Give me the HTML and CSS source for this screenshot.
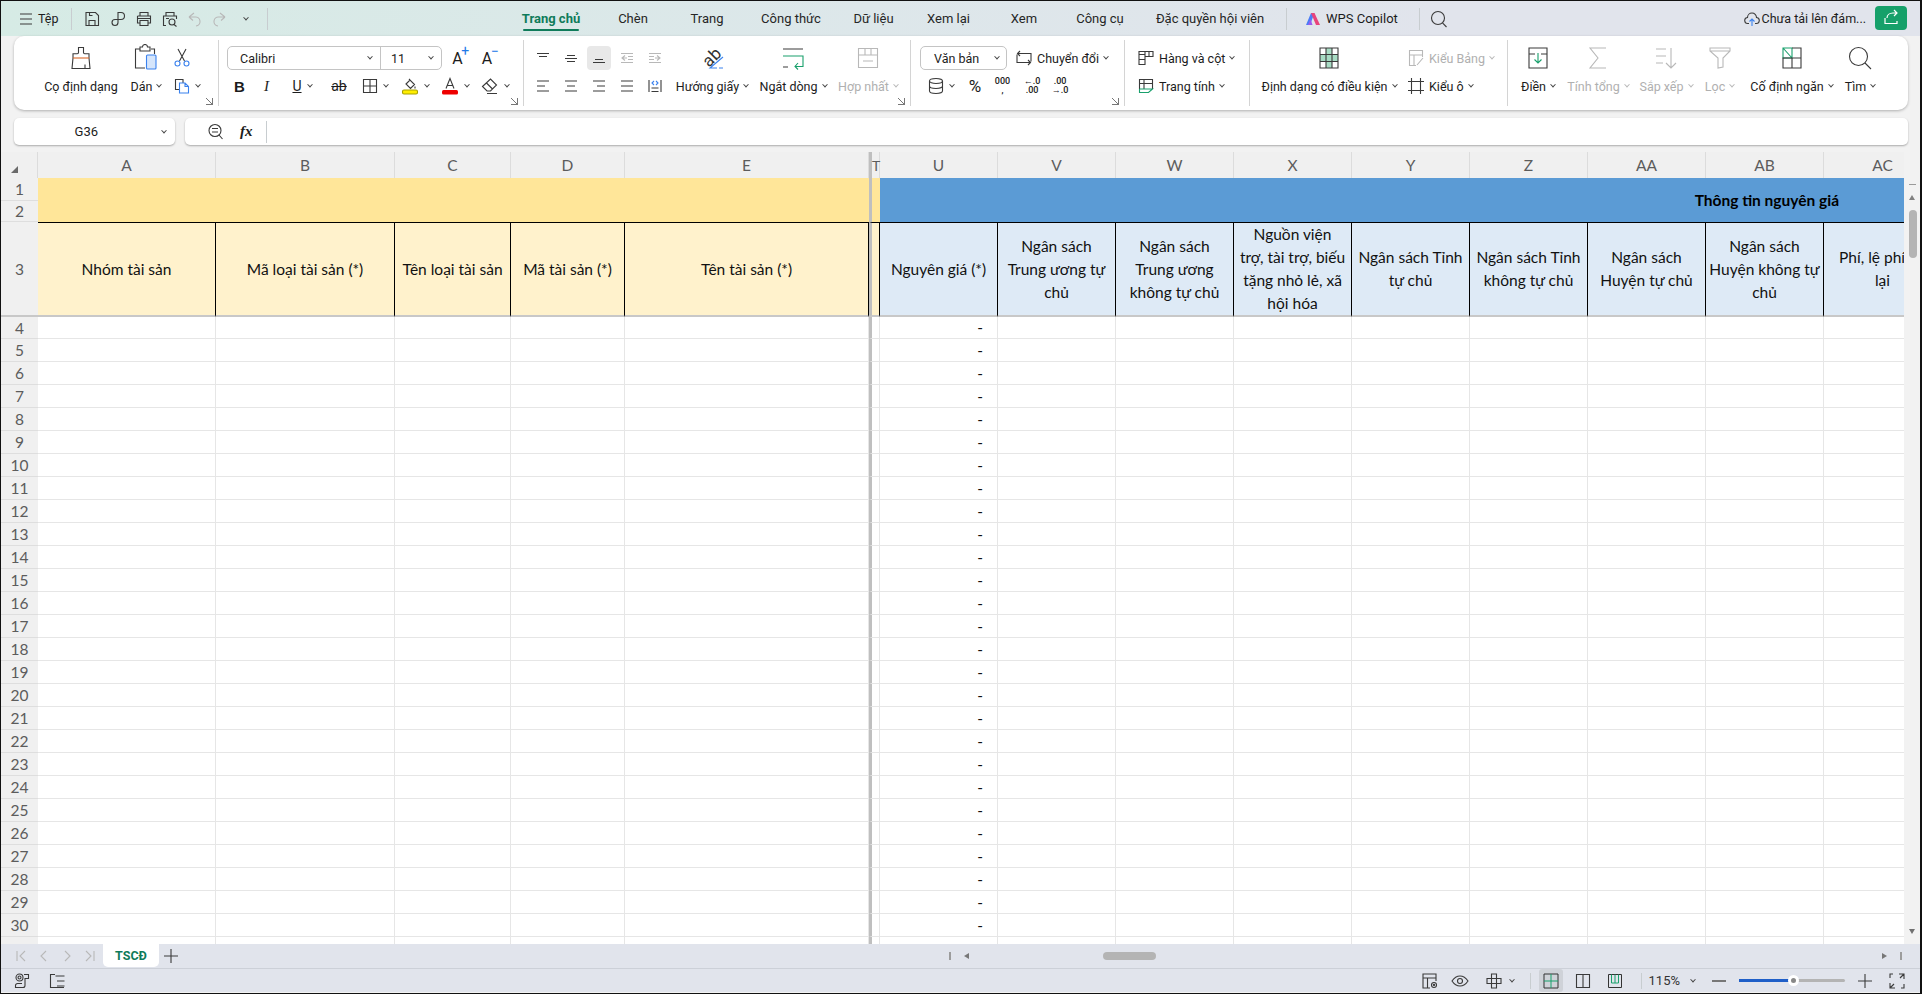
FILE: index.html
```html
<!DOCTYPE html>
<html lang="vi">
<head>
    <meta charset="UTF-8">
    <meta name="viewport" content="width=device-width, initial-scale=1.0">
    <title>TSCĐ</title>
    <link rel="stylesheet" href="styles.css">
</head>
<body>
<div class="app">

    <!-- Title bar -->
    <header class="titlebar">
        <div class="quick">
            <svg class="ico ham" width="16" height="16" viewBox="0 0 16 16"><path d="M2 3h12M2 8h12M2 13h12"/></svg>
            <span class="file">Tệp</span>
            <i class="vline first"></i>
            <svg class="ico q" width="16" height="16" viewBox="0 0 16 16"><path d="M2 1.500h9.500l3 3v10h-12.500zM5 14.500v-5h6v5M5.500 1.500v3h3"/></svg>
            <svg class="ico q" width="16" height="16" viewBox="0 0 16 16"><path d="M8 1.500h3a3.500 3.500 0 0 1 0 7H8zM8 8.500v3a3 3 0 1 1-3-3h3"/></svg>
            <svg class="ico q" width="16" height="16" viewBox="0 0 16 16"><path d="M4 5V1.500h8V5M1.500 5h13v7H12M4 12H1.500V5M4 9.500h8v5H4zM1.500 7.500h13"/></svg>
            <svg class="ico q" width="16" height="16" viewBox="0 0 16 16"><path d="M4 5V1.500h8V5M1.500 12V5h13v3M4 14.500H1.500V12M4 7.500h3"/><circle cx="10" cy="11" r="3"/><path d="M12 13.500l2.500 2"/></svg>
            <svg class="ico q off undo" width="16" height="16" viewBox="0 0 16 16"><path d="M3 6l5-4M3 6l4 3.500M3 6h6a4.500 4.500 0 0 1 1 9"/></svg>
            <svg class="ico q off" width="16" height="16" viewBox="0 0 16 16"><path d="M13 6L8 2M13 6l-4 3.500M13 6H7a4.500 4.500 0 0 0-1 9"/></svg>
            <i class="chev qchev"></i>
            <i class="vline last"></i>
        </div>
        <nav class="tabs">
            <a class="tab active">Trang chủ</a>
            <a class="tab">Chèn</a>
            <a class="tab">Trang</a>
            <a class="tab">Công thức</a>
            <a class="tab">Dữ liệu</a>
            <a class="tab">Xem lại</a>
            <a class="tab">Xem</a>
            <a class="tab">Công cụ</a>
            <a class="tab">Đặc quyền hội viên</a>
        </nav>
        <i class="vline copilot-sep"></i>
        <div class="copilot">
            <svg width="16" height="14" viewBox="0 0 16 14"><path d="M1 13L6 1h3.500L5 13z" fill="#4a7cf6"/><path d="M6 1h3.500l5.500 12h-4z" fill="#e8447c"/><path d="M3 13l2.500-6 2 6z" fill="#9a5cf0"/></svg>
            <span>WPS Copilot</span>
        </div>
        <i class="vline search-sep"></i>
        <svg class="ico find" width="18" height="18" viewBox="0 0 18 18"><circle cx="8" cy="8" r="6.500"/><path d="M12.500 12.800l4 4.200"/></svg>
        <div class="cloud">
            <svg class="ico" width="16" height="16" viewBox="0 0 16 16"><path d="M5 12.500H4a3 3 0 0 1-.5-6 4.500 4.500 0 0 1 9 0 3 3 0 0 1-.5 6h-1"/><path class="blue" d="M8 15V8M5.500 10.500L8 8l2.500 2.500"/></svg>
            <span>Chưa tải lên đám...</span>
        </div>
        <button class="share">
            <svg width="18" height="18" viewBox="0 0 18 18"><path d="M3 9v5.500h12V12M5 9c0-3 2.500-5 6-5h4M12 1l3 3-3 3" fill="none" stroke="#fff" stroke-width="1.200"/></svg>
        </button>
    </header>

    <!-- Ribbon -->
    <section class="ribbon">
        <div class="group g1">
            <div class="big w90">
                <svg class="ico" width="24" height="24" viewBox="0 0 24 24"><path d="M9.500 1.500h5v5c0 .8.500 1.200 1.200 1.200h4.300v4.300l1 10.500H3l1-10.500V7.700h4.300c.700 0 1.200-.400 1.200-1.200z"/><path class="orange" d="M4 12h16"/><path d="M16 22.500v-4"/></svg>
                <span>Cọ định dạng</span>
            </div>
            <div class="big w40">
                <svg class="ico" width="24" height="26" viewBox="0 0 24 26"><path d="M6 4H1.500v19H11M17 4h3.500v5M6 2h2.500a2 2 0 0 1 5 0H16v4H6z"/><rect class="blue-fill" x="12.500" y="10" width="9.500" height="14" rx="1"/></svg>
                <span class="lab">Dán<i class="chev"></i></span>
            </div>
            <div class="tools col-copy">
                <div class="tool cut"><svg class="ico" width="16" height="20" viewBox="0 0 16 20"><path d="M4 1l6.500 12M12 1L5.500 13"/><circle class="blue" cx="3.500" cy="15.500" r="2.500"/><circle class="blue" cx="12.500" cy="15.500" r="2.500"/></svg></div>
                <div class="tool"><svg class="ico" width="16" height="16" viewBox="0 0 16 16"><path d="M5 11.500H1.500v-10H9V5"/><path class="blue" d="M5.500 5h5.500l3.500 3.500v6.500h-9zM11 5v3.500h3.500"/></svg><i class="chev"></i></div>
            </div>
            <i class="launcher"></i>
        </div>

        <div class="group g2">
            <div class="tools">
                <div class="line font-line">
                    <div class="select">
                        <span class="font-name">Calibri<i class="chev"></i></span>
                        <span class="font-size">11<i class="chev"></i></span>
                    </div>
                    <div class="tool"><span class="grow">A<b>+</b></span></div>
                    <div class="tool"><span class="grow">A<b>−</b></span></div>
                </div>
                <div class="line format-line">
                    <div class="tool bold">B</div>
                    <div class="tool italic">I</div>
                    <div class="tool"><span class="under">U</span><i class="chev"></i></div>
                    <div class="tool strike">ab</div>
                    <div class="tool"><svg class="ico" width="16" height="16" viewBox="0 0 16 16"><path d="M1.500 1.500h13v13h-13zM8 1.500v13M1.500 8h13"/></svg><i class="chev"></i></div>
                    <div class="tool"><svg class="ico" width="18" height="18" viewBox="0 0 18 18"><path d="M5 7l4-4 4.500 4.500-4 4zM8 2l1 1M14 9.500v2"/><rect x="1.500" y="13" width="15" height="4" rx="1.500" fill="#ffee00" stroke="#a8a000"/></svg><i class="chev"></i></div>
                    <div class="tool"><svg class="ico" width="18" height="18" viewBox="0 0 18 18"><path d="M5 11.500L9 1.500l4 10M6.200 8.500h5.600"/><rect x="1" y="13" width="16" height="4.500" rx="1.500" fill="#ee0000" stroke="none"/></svg><i class="chev"></i></div>
                    <div class="tool"><svg class="ico" width="18" height="18" viewBox="0 0 18 18"><path d="M1.500 9.500L9.500 2l6 6-6 6H6zM5.500 6l6 6M6 16.500h10"/></svg><i class="chev"></i></div>
                </div>
            </div>
            <i class="launcher"></i>
        </div>

        <div class="group g3">
            <div class="tools">
                <div class="line align-line">
                    <div class="tool"><svg class="ico" width="14" height="12" viewBox="0 0 14 12"><path d="M1 1.500h12M3 4.500h8"/></svg></div>
                    <div class="tool"><svg class="ico" width="14" height="12" viewBox="0 0 14 12"><path d="M3 3.500h8M1 6.500h12M3 9.500h8"/></svg></div>
                    <div class="tool"><span class="selected"><svg class="ico" width="14" height="12" viewBox="0 0 14 12"><path d="M3 7.500h8M1 10.500h12"/></svg></span></div>
                    <div class="tool"><svg class="ico off" width="14" height="12" viewBox="0 0 14 12"><path d="M1 1.500h12M8 4.500h5M8 7.500h5M1 10.500h12M5 3.500L2 6l3 2.500M2 6h5"/></svg></div>
                    <div class="tool"><svg class="ico off" width="14" height="12" viewBox="0 0 14 12"><path d="M1 1.500h12M1 4.500h5M1 7.500h5M1 10.500h12M9 3.500L12 6l-3 2.500M12 6H7"/></svg></div>
                </div>
                <div class="line align-line">
                    <div class="tool"><svg class="ico" width="14" height="12" viewBox="0 0 14 12"><path d="M1 1h12M1 6h8M1 11h12"/></svg></div>
                    <div class="tool"><svg class="ico" width="14" height="12" viewBox="0 0 14 12"><path d="M1 1h12M3 6h8M1 11h12"/></svg></div>
                    <div class="tool"><svg class="ico" width="14" height="12" viewBox="0 0 14 12"><path d="M1 1h12M5 6h8M1 11h12"/></svg></div>
                    <div class="tool"><svg class="ico" width="14" height="12" viewBox="0 0 14 12"><path d="M1 1h12M1 6h12M1 11h12"/></svg></div>
                    <div class="tool"><svg class="ico" width="14" height="14" viewBox="0 0 14 14"><path d="M1 1v12M13 1v12M3.500 9h7M3.500 12.500h7"/><path class="blue" d="M6 2L4 4l2 2M8 2l2 2-2 2"/></svg></div>
                </div>
            </div>
            <div class="big w86">
                <div class="orient"><span>ab</span><svg class="ico" width="24" height="24" viewBox="0 0 24 24"><path class="blue" d="M23 11L10 22h7M19 22h4"/></svg></div>
                <span class="lab">Hướng giấy<i class="chev"></i></span>
            </div>
            <div class="big w76">
                <svg class="ico" width="22" height="22" viewBox="0 0 22 22"><path d="M1 2h20M1 20h5"/><path class="green" d="M1 9h20v10.500h-8M16 16l-3 3.500 3 3"/></svg>
                <span class="lab">Ngắt dòng<i class="chev"></i></span>
            </div>
            <div class="big w74 dim">
                <svg class="ico" width="22" height="22" viewBox="0 0 22 22"><path d="M1.500 1.500h19v19h-19zM1.500 8h19M8 1.500V8M14 1.500V8M6 14h10"/></svg>
                <span class="lab">Hợp nhất<i class="chev"></i></span>
            </div>
            <i class="launcher"></i>
        </div>

        <div class="group g4">
            <div class="tools">
                <div class="line type-line">
                    <div class="select type-select"><span>Văn bản</span><i class="chev"></i></div>
                    <div class="tool lefty"><svg class="ico" width="16" height="16" viewBox="0 0 16 16"><path d="M4 1L1.500 3.500 4 6M1.500 3.500H15v8M12 15l2.500-2.500L12 10M14.500 12.500H1v-8"/></svg><span class="lab">Chuyển đổi<i class="chev"></i></span></div>
                </div>
                <div class="line num-line">
                    <div class="tool"><svg class="ico" width="16" height="18" viewBox="0 0 16 18"><ellipse cx="8" cy="4" rx="6.500" ry="2.500"/><path d="M1.500 4v10c0 1.500 3 2.500 6.500 2.500s6.500-1 6.500-2.500V4M1.500 9c0 1.500 3 2.500 6.500 2.500S14.500 10.500 14.500 9"/></svg><i class="chev"></i></div>
                    <div class="tool pct">%</div>
                    <div class="tool mini"><span>000<br>,</span></div>
                    <div class="tool mini"><span>←.0<br>.00</span></div>
                    <div class="tool mini"><span>.00<br>→.0</span></div>
                </div>
            </div>
            <i class="launcher"></i>
        </div>

        <div class="group g5">
            <div class="tools">
                <div class="line"><div class="tool lefty"><svg class="ico" width="16" height="16" viewBox="0 0 16 16"><path d="M1 4.500h6v10H1zM1 9.500h6M7 1.500h8v5H7zM1 4.500V1.500h6M11 1.500v5"/></svg><span class="lab">Hàng và cột<i class="chev"></i></span></div></div>
                <div class="line"><div class="tool lefty"><svg class="ico" width="16" height="16" viewBox="0 0 16 16"><path d="M1.500 11V1.500h13V11M1.500 5.500h13M6 1.500v9.500"/><path class="green" d="M1.500 11v3.500h9l4-3.500h-13"/></svg><span class="lab">Trang tính<i class="chev"></i></span></div></div>
            </div>
        </div>

        <div class="group g6">
            <div class="big w142">
                <svg class="ico" width="20" height="22" viewBox="0 0 20 22"><rect class="green-fill" x="7" y="1" width="6" height="20"/><rect class="green-fill" x="1" y="7.500" width="18" height="7"/><path d="M1 1h18v20H1zM1 7.500h18M1 14.500h18M7 1v20M13 1v20"/></svg>
                <span class="lab">Định dạng có điều kiện<i class="chev"></i></span>
            </div>
            <div class="tools style-col">
                <div class="line"><div class="tool lefty dim"><svg class="ico" width="16" height="18" viewBox="0 0 16 18"><path d="M8 16.500H1.500v-15h13V8M1.500 6h13M6 6v10.500M9 16l6-7"/></svg><span class="lab">Kiểu Bảng<i class="chev"></i></span></div></div>
                <div class="line"><div class="tool lefty"><svg class="ico" width="16" height="16" viewBox="0 0 16 16"><path d="M3.500 0v16M12.500 0v16M0 3.500h16M0 12.500h16"/></svg><span class="lab">Kiểu ô<i class="chev"></i></span></div></div>
            </div>
        </div>

        <div class="group g7">
            <div class="big w56">
                <svg class="ico" width="20" height="22" viewBox="0 0 20 22"><path d="M1 1h18v20H1zM1 7h6M13 7h6"/><path class="green" d="M10 6v10M6.500 12.500L10 16l3.500-3.500"/></svg>
                <span class="lab">Điền<i class="chev"></i></span>
            </div>
            <div class="big w64 dim">
                <svg class="ico" width="20" height="22" viewBox="0 0 20 22"><path d="M18 1H2l8 10-8 10h16"/></svg>
                <span class="lab">Tính tổng<i class="chev"></i></span>
            </div>
            <div class="big w72 dim">
                <svg class="ico" width="22" height="22" viewBox="0 0 22 22"><path d="M1 2h10M1 9h10M1 16h7M16 1v20M11 16l5 5 5-5"/></svg>
                <span class="lab">Sắp xếp<i class="chev"></i></span>
            </div>
            <div class="big w35 dim">
                <svg class="ico" width="22" height="22" viewBox="0 0 22 22"><path d="M1 1h20v3l-7 7v9l-5 1V11L1 4zM1 4h20"/></svg>
                <span class="lab">Lọc<i class="chev"></i></span>
            </div>
            <div class="big w101">
                <svg class="ico" width="20" height="22" viewBox="0 0 20 22"><path class="green" d="M1 1h9v10H1zM1 1l9 10"/><path d="M10 1h9v20H1V11h18M10 11v10"/></svg>
                <span class="lab">Cố định ngăn<i class="chev"></i></span>
            </div>
            <div class="big w36">
                <svg class="ico" width="24" height="24" viewBox="0 0 24 24"><circle cx="10.500" cy="10.500" r="9"/><path d="M17 17l6 6"/></svg>
                <span class="lab">Tìm<i class="chev"></i></span>
            </div>
        </div>
    </section>

    <!-- Formula bar -->
    <section class="formula">
        <div class="namebox"><span>G36</span><i class="chev"></i></div>
        <div class="fxbox">
            <svg class="ico" width="16" height="18" viewBox="0 0 16 18"><circle cx="7" cy="7.500" r="6"/><path d="M4 5.500h6M4 9h6M11 12l3.500 4"/></svg>
            <span class="fx">fx</span>
            <i class="vline"></i>
        </div>
    </section>

    <!-- Sheet -->
    <section class="sheet">
        <div class="gridwrap">
            <table class="grid">
                <colgroup>
                    <col class="c-row"><col class="c-a"><col class="c-b"><col class="c-c"><col class="c-d"><col class="c-e"><col class="c-t">
                    <col class="c-u"><col class="c-u"><col class="c-u"><col class="c-u"><col class="c-u"><col class="c-u"><col class="c-u"><col class="c-u"><col class="c-u">
                </colgroup>
                <thead>
                    <tr class="r-cols">
                        <th class="corner"><i></i></th>
                        <th>A</th><th>B</th><th>C</th><th>D</th><th>E</th><th class="t">T</th>
                        <th>U</th><th>V</th><th>W</th><th>X</th><th>Y</th><th>Z</th><th>AA</th><th>AB</th><th>AC</th>
                    </tr>
                </thead>
                <tbody>
                    <tr class="r1">
                        <th>1</th>
                        <td class="gold" colspan="5" rowspan="2"></td>
                        <td class="gold t" rowspan="2"></td>
                        <td class="steel" colspan="9" rowspan="2"><strong>Thông tin nguyên giá</strong></td>
                    </tr>
                    <tr class="r2"><th>2</th></tr>
                    <tr class="r3">
                        <th>3</th>
                        <td class="cream">Nhóm tài sản</td>
                        <td class="cream">Mã loại tài sản (*)</td>
                        <td class="cream">Tên loại tài sản</td>
                        <td class="cream">Mã tài sản (*)</td>
                        <td class="cream">Tên tài sản (*)</td>
                        <td class="cream t"></td>
                        <td class="sky">Nguyên giá (*)</td>
                        <td class="sky">Ngân sách<br>Trung ương tự<br>chủ</td>
                        <td class="sky">Ngân sách<br>Trung ương<br>không tự chủ</td>
                        <td class="sky">Nguồn viện<br>trợ, tài trợ, biếu<br>tặng nhỏ lẻ, xã<br>hội hóa</td>
                        <td class="sky">Ngân sách Tỉnh<br>tự chủ</td>
                        <td class="sky">Ngân sách Tỉnh<br>không tự chủ</td>
                        <td class="sky">Ngân sách<br>Huyện tự chủ</td>
                        <td class="sky">Ngân sách<br>Huyện không tự<br>chủ</td>
                        <td class="sky">Phí, lệ phí để<br>lại</td>
                    </tr>
                    <tr class="r4"><th>4</th><td></td><td></td><td></td><td></td><td></td><td class="t"></td><td class="num">-</td><td></td><td></td><td></td><td></td><td></td><td></td><td></td><td></td></tr>
                    <tr><th>5</th><td></td><td></td><td></td><td></td><td></td><td class="t"></td><td class="num">-</td><td></td><td></td><td></td><td></td><td></td><td></td><td></td><td></td></tr>
                    <tr><th>6</th><td></td><td></td><td></td><td></td><td></td><td class="t"></td><td class="num">-</td><td></td><td></td><td></td><td></td><td></td><td></td><td></td><td></td></tr>
                    <tr><th>7</th><td></td><td></td><td></td><td></td><td></td><td class="t"></td><td class="num">-</td><td></td><td></td><td></td><td></td><td></td><td></td><td></td><td></td></tr>
                    <tr><th>8</th><td></td><td></td><td></td><td></td><td></td><td class="t"></td><td class="num">-</td><td></td><td></td><td></td><td></td><td></td><td></td><td></td><td></td></tr>
                    <tr><th>9</th><td></td><td></td><td></td><td></td><td></td><td class="t"></td><td class="num">-</td><td></td><td></td><td></td><td></td><td></td><td></td><td></td><td></td></tr>
                    <tr><th>10</th><td></td><td></td><td></td><td></td><td></td><td class="t"></td><td class="num">-</td><td></td><td></td><td></td><td></td><td></td><td></td><td></td><td></td></tr>
                    <tr><th>11</th><td></td><td></td><td></td><td></td><td></td><td class="t"></td><td class="num">-</td><td></td><td></td><td></td><td></td><td></td><td></td><td></td><td></td></tr>
                    <tr><th>12</th><td></td><td></td><td></td><td></td><td></td><td class="t"></td><td class="num">-</td><td></td><td></td><td></td><td></td><td></td><td></td><td></td><td></td></tr>
                    <tr><th>13</th><td></td><td></td><td></td><td></td><td></td><td class="t"></td><td class="num">-</td><td></td><td></td><td></td><td></td><td></td><td></td><td></td><td></td></tr>
                    <tr><th>14</th><td></td><td></td><td></td><td></td><td></td><td class="t"></td><td class="num">-</td><td></td><td></td><td></td><td></td><td></td><td></td><td></td><td></td></tr>
                    <tr><th>15</th><td></td><td></td><td></td><td></td><td></td><td class="t"></td><td class="num">-</td><td></td><td></td><td></td><td></td><td></td><td></td><td></td><td></td></tr>
                    <tr><th>16</th><td></td><td></td><td></td><td></td><td></td><td class="t"></td><td class="num">-</td><td></td><td></td><td></td><td></td><td></td><td></td><td></td><td></td></tr>
                    <tr><th>17</th><td></td><td></td><td></td><td></td><td></td><td class="t"></td><td class="num">-</td><td></td><td></td><td></td><td></td><td></td><td></td><td></td><td></td></tr>
                    <tr><th>18</th><td></td><td></td><td></td><td></td><td></td><td class="t"></td><td class="num">-</td><td></td><td></td><td></td><td></td><td></td><td></td><td></td><td></td></tr>
                    <tr><th>19</th><td></td><td></td><td></td><td></td><td></td><td class="t"></td><td class="num">-</td><td></td><td></td><td></td><td></td><td></td><td></td><td></td><td></td></tr>
                    <tr><th>20</th><td></td><td></td><td></td><td></td><td></td><td class="t"></td><td class="num">-</td><td></td><td></td><td></td><td></td><td></td><td></td><td></td><td></td></tr>
                    <tr><th>21</th><td></td><td></td><td></td><td></td><td></td><td class="t"></td><td class="num">-</td><td></td><td></td><td></td><td></td><td></td><td></td><td></td><td></td></tr>
                    <tr><th>22</th><td></td><td></td><td></td><td></td><td></td><td class="t"></td><td class="num">-</td><td></td><td></td><td></td><td></td><td></td><td></td><td></td><td></td></tr>
                    <tr><th>23</th><td></td><td></td><td></td><td></td><td></td><td class="t"></td><td class="num">-</td><td></td><td></td><td></td><td></td><td></td><td></td><td></td><td></td></tr>
                    <tr><th>24</th><td></td><td></td><td></td><td></td><td></td><td class="t"></td><td class="num">-</td><td></td><td></td><td></td><td></td><td></td><td></td><td></td><td></td></tr>
                    <tr><th>25</th><td></td><td></td><td></td><td></td><td></td><td class="t"></td><td class="num">-</td><td></td><td></td><td></td><td></td><td></td><td></td><td></td><td></td></tr>
                    <tr><th>26</th><td></td><td></td><td></td><td></td><td></td><td class="t"></td><td class="num">-</td><td></td><td></td><td></td><td></td><td></td><td></td><td></td><td></td></tr>
                    <tr><th>27</th><td></td><td></td><td></td><td></td><td></td><td class="t"></td><td class="num">-</td><td></td><td></td><td></td><td></td><td></td><td></td><td></td><td></td></tr>
                    <tr><th>28</th><td></td><td></td><td></td><td></td><td></td><td class="t"></td><td class="num">-</td><td></td><td></td><td></td><td></td><td></td><td></td><td></td><td></td></tr>
                    <tr><th>29</th><td></td><td></td><td></td><td></td><td></td><td class="t"></td><td class="num">-</td><td></td><td></td><td></td><td></td><td></td><td></td><td></td><td></td></tr>
                    <tr><th>30</th><td></td><td></td><td></td><td></td><td></td><td class="t"></td><td class="num">-</td><td></td><td></td><td></td><td></td><td></td><td></td><td></td><td></td></tr>
                    <tr><th></th><td></td><td></td><td></td><td></td><td></td><td class="t"></td><td class="num"></td><td></td><td></td><td></td><td></td><td></td><td></td><td></td><td></td></tr>
                </tbody>
            </table>
        </div>
        <div class="vscroll">
            <i class="dash"></i>
            <i class="arrow up"></i>
            <i class="thumb"></i>
            <i class="arrow down"></i>
        </div>
    </section>

    <!-- Sheet tabs -->
    <section class="sheetbar">
        <div class="nav">
            <svg class="ico off" width="12" height="14" viewBox="0 0 12 14"><path d="M2 2v10M10 2L5 7l5 5"/></svg>
            <svg class="ico off" width="12" height="14" viewBox="0 0 12 14"><path d="M8 2L3 7l5 5"/></svg>
            <svg class="ico off" width="12" height="14" viewBox="0 0 12 14"><path d="M4 2l5 5-5 5"/></svg>
            <svg class="ico off" width="12" height="14" viewBox="0 0 12 14"><path d="M2 2l5 5-5 5M10 2v10"/></svg>
        </div>
        <div class="sheet-tab">TSCĐ</div>
        <svg class="ico add" width="14" height="14" viewBox="0 0 14 14"><path d="M7 0v14M0 7h14"/></svg>
        <div class="hscroll">
            <i class="bar"></i>
            <i class="tri left"></i>
            <div class="track"><i class="hthumb"></i></div>
            <i class="tri right"></i>
            <i class="bar"></i>
        </div>
    </section>

    <!-- Status bar -->
    <footer class="statusbar">
        <svg class="ico st-a" width="16" height="16" viewBox="0 0 16 16"><circle cx="5.500" cy="4.500" r="3.500"/><circle cx="5.500" cy="4.500" r="1.500"/><path d="M10 1.500h4.500v4H11v7a2 2 0 0 1-2 2H1.500v-2a2 2 0 0 1 2-2H8"/></svg>
        <svg class="ico st-b" width="16" height="16" viewBox="0 0 16 16"><path d="M6 1.500H1.500v13H6M6.500 3h9M8 8h7.500M8 13h7.500M6 14.500h9"/></svg>
        <div class="st-right">
            <svg class="ico" width="16" height="16" viewBox="0 0 16 16"><path d="M8 15H1V1h13v7M1 5h13M5.500 5v10"/><circle cx="12" cy="12" r="2.500"/><circle cx="12" cy="12" r=".6"/></svg>
            <svg class="ico eye" width="18" height="12" viewBox="0 0 18 12"><path d="M1 6c2-3 5-5 8-5s6 2 8 5c-2 3-5 5-8 5S3 9 1 6z"/><circle cx="9" cy="6" r="2.500"/></svg>
            <span class="cross"><svg class="ico" width="16" height="16" viewBox="0 0 16 16"><path d="M5.500 1h5v4.500H15v5h-4.500V15h-5v-4.500H1v-5h4.500zM5.500 5.500h5v5h-5z"/></svg><i class="chev"></i></span>
            <i class="vline after-cross"></i>
            <span class="view active"><svg width="16" height="16" viewBox="0 0 16 16"><path d="M1 1h14v14H1z" fill="none" stroke="#333"/><path d="M8 1v14M1 8h14" stroke="#19a06c" fill="none"/></svg></span>
            <span class="view"><svg class="ico" width="16" height="16" viewBox="0 0 16 16"><path d="M1.500 1.500h13v13h-13zM8 1.500v13"/></svg></span>
            <span class="view"><svg width="16" height="16" viewBox="0 0 16 16"><path d="M1.500 1.500h13v13h-13z" fill="none" stroke="#333"/><path d="M4.500 1.500V10h7V1.500M8 1.500V10" fill="none" stroke="#19a06c"/></svg></span>
            <i class="vline"></i>
            <span class="zoom">115%<i class="chev"></i></span>
            <i class="minus"></i>
            <div class="slider"><i class="fill"></i><i class="knob"></i></div>
            <svg class="ico plus" width="14" height="14" viewBox="0 0 14 14"><path d="M7 0v14M0 7h14"/></svg>
            <svg class="ico full" width="16" height="16" viewBox="0 0 16 16"><path d="M10 1h5v5M15 1l-4 4M6 15H1v-5M1 15l4-4M1 5V1h3M15 11v4h-3"/></svg>
        </div>
    </footer>
</div>
</body>
</html>
```

FILE: styles.css
```css
* {
    margin: 0;
    padding: 0;
    box-sizing: border-box;
}
html, body {
    height: 100%;
    overflow: hidden;
}
body {
    font-family: Roboto, "Noto Sans", sans-serif;
    font-size: 12.5px;
    color: #1c1c1c;
}
i {
    display: block;
}
.app {
    width: 1922px;
    height: 994px;
    border: 1px solid #111;
    border-right-width: 2px;
    background: #f2f2f2;
    display: flex;
    flex-direction: column;
    overflow: hidden;
}

/* icons */
.ico {
    fill: none;
    stroke: #3a3a3a;
    stroke-width: 1.1;
    flex: none;
    display: block;
}
.ico.off, .dim .ico {
    stroke: #b8b8b8;
}
.ico .blue {
    stroke: #3b82ee;
}
.ico .blue-fill {
    fill: #d5e5fb;
    stroke: #3b82ee;
}
.ico .green {
    stroke: #19a06c;
}
.ico .green-fill {
    fill: #a8dcc4;
    stroke: none;
}
.ico .orange {
    stroke: #d9682b;
}
.chev {
    width: 4px;
    height: 4px;
    border-right: 1px solid #444;
    border-bottom: 1px solid #444;
    transform: rotate(45deg) translate(-1px, -1px);
    flex: none;
}
.dim .chev {
    border-color: #b8b8b8;
}
.vline {
    width: 1px;
    height: 22px;
    background: #c8cdd0;
    flex: none;
}

/* title bar */
.titlebar {
    height: 35px;
    flex: none;
    display: flex;
    align-items: center;
    background: linear-gradient(90deg, #d6ebe5 0%, #dde7ea 45%, #e1e4ec 75%, #e1e4ec 100%);
}
.quick {
    width: 509px;
    display: flex;
    align-items: center;
    flex: none;
}
.ham {
    margin-left: 17px;
}
.file {
    margin-left: 4px;
    font-size: 12.5px;
}
.quick .first {
    margin-left: 12px;
    margin-right: 12px;
}
.q {
    margin-right: 10px;
}
.undo {
    margin-left: -2px;
}
.qchev {
    margin-left: 6px;
}
.quick .last {
    margin-left: 19px;
}
.tabs {
    display: grid;
    grid-template-columns: 82px 82px 66px 102px 63px 87px 64px 88px 132px;
    flex: none;
}
.tab {
    font-size: 13px;
    height: 35px;
    display: flex;
    align-items: center;
    justify-content: center;
    position: relative;
    color: #262626;
}
.tab.active {
    font-weight: 700;
    color: #0f7b5a;
}
.tab.active::after {
    content: "";
    position: absolute;
    left: 13px;
    right: 13px;
    bottom: 5px;
    height: 2px;
    border-radius: 1px;
    background: #0f7b5a;
}
.copilot-sep {
    margin-left: 10px;
}
.copilot {
    margin-left: 18px;
    display: flex;
    align-items: center;
    gap: 5px;
    font-size: 13px;
    width: 114px;
}
.find {
    margin-left: 10px;
}
.cloud {
    margin-left: auto;
    display: flex;
    align-items: center;
    gap: 2px;
}
.share {
    width: 32px;
    height: 24px;
    margin: 0 13px 2px 9px;
    background: #16a06a;
    border: none;
    border-radius: 4px;
    display: flex;
    align-items: center;
    justify-content: center;
}

/* ribbon */
.ribbon {
    height: 74px;
    margin: 0 12px 0 13px;
    flex: none;
    display: flex;
    padding: 4px 0;
    background: #fff;
    border-radius: 10px;
    box-shadow: 0 1px 3px rgba(0, 0, 0, 0.28);
}
.group {
    position: relative;
    display: flex;
    height: 66px;
    padding-top: 4px;
    border-right: 1px solid #d4d4d4;
    flex: none;
}
.g1 { width: 205px; padding-left: 22px; }
.g2 { width: 305px; padding-left: 7px; }
.g3 { width: 387px; padding-left: 5px; }
.g4 { width: 214px; padding-left: 9px; }
.g5 { width: 125px; padding-left: 13px; }
.g6 { width: 258px; padding-left: 8px; }
.g7 { width: 400px; padding-left: 2px; border-right: none; }
.big {
    display: flex;
    flex-direction: column;
    align-items: center;
    flex: none;
}
.big > svg {
    height: 28px;
}
.big > span {
    height: 28px;
    display: flex;
    align-items: center;
    white-space: nowrap;
}
.orient {
    width: 24px;
    height: 28px;
    position: relative;
}
.orient span {
    position: absolute;
    left: 0;
    top: 3px;
    width: 23px;
    text-align: center;
    font-size: 17px;
    line-height: 20px;
    color: #333;
    transform: rotate(-45deg);
}
.orient svg {
    margin-top: 2px;
}
.dim {
    color: #b0b0b0;
}
.w35 { width: 35px; margin-right: 4px; }
.w36 { width: 36px; }
.w40 { width: 40px; }
.w56 { width: 56px; }
.w64 { width: 64px; }
.w72 { width: 72px; }
.w74 { width: 74px; }
.w76 { width: 76px; }
.w86 { width: 86px; }
.w90 { width: 90px; }
.w101 { width: 101px; }
.w142 { width: 142px; }
.lab {
    display: flex;
    align-items: center;
    gap: 5px;
    white-space: nowrap;
}
.tools {
    flex: none;
}
.style-col {
    margin-left: 8px;
}
.line {
    height: 28px;
    display: grid;
    align-items: center;
}
.tool {
    height: 28px;
    display: flex;
    align-items: center;
    justify-content: center;
    gap: 6px;
}
.tool.lefty {
    justify-content: flex-start;
    gap: 5px;
}
.col-copy {
    margin-left: 8px;
}
.col-copy .tool {
    justify-content: flex-start;
}
.launcher {
    position: absolute;
    right: 5px;
    bottom: 1px;
    width: 7px;
    height: 7px;
    border-right: 1px solid #777;
    border-bottom: 1px solid #777;
    background: linear-gradient(45deg, transparent 46%, #777 46%, #777 58%, transparent 58%);
}
.font-line {
    grid-template-columns: 215px 27px 28px;
    margin-left: 1px;
    column-gap: 2px;
}
.select {
    height: 24px;
    border: 1px solid #c4c4c4;
    border-radius: 5px;
    display: flex;
    align-items: center;
}
.font-name {
    width: 153px;
    height: 100%;
    padding: 0 8px 0 12px;
    display: flex;
    align-items: center;
    justify-content: space-between;
    border-right: 1px solid #c4c4c4;
}
.font-size {
    flex: 1;
    padding: 0 8px 0 10px;
    display: flex;
    align-items: center;
    justify-content: space-between;
}
.grow {
    font-size: 16px;
    position: relative;
}
.grow b {
    position: absolute;
    left: 9px;
    top: -6px;
    font-weight: 400;
    color: #1f7ae8;
    font-size: 14px;
}
.format-line {
    grid-template-columns: 27px 27px 44px 30px 41px 39px 41px 39px;
}
.bold {
    font-family: "Liberation Sans", sans-serif;
    font-weight: 700;
    font-size: 15px;
}
.italic {
    font-family: "Liberation Serif", serif;
    font-style: italic;
    font-size: 15px;
}
.under {
    text-decoration: underline;
    font-size: 14px;
}
.strike {
    text-decoration: line-through;
    font-size: 14px;
}
.align-line {
    grid-template-columns: repeat(5, 28px);
}
.selected {
    width: 24px;
    height: 24px;
    background: #e8e8e8;
    border-radius: 4px;
    display: flex;
    align-items: center;
    justify-content: center;
}
.type-line {
    grid-template-columns: 87px 100px;
    column-gap: 9px;
}
.type-select {
    padding: 0 7px 0 13px;
    justify-content: space-between;
}
.num-line {
    grid-template-columns: 41px 28px 27px 32px 24px;
}
.pct {
    font-size: 17px;
}
.mini {
    font-size: 9px;
    line-height: 9px;
    text-align: center;
    font-weight: 500;
}

/* formula bar */
.formula {
    height: 27px;
    margin: 8px 12px 7px 13px;
    flex: none;
    display: flex;
    gap: 10px;
}
.namebox, .fxbox {
    background: #fff;
    border-radius: 5px;
    box-shadow: 0 1px 2px rgba(0, 0, 0, 0.3);
    display: flex;
    align-items: center;
}
.namebox {
    width: 161px;
    padding-right: 9px;
    justify-content: flex-end;
    font-size: 13px;
}
.namebox span {
    margin-right: 64px;
}
.fxbox {
    flex: 1;
    padding-left: 23px;
}
.fx {
    margin-left: 16px;
    font-family: "Liberation Serif", serif;
    font-style: italic;
    font-weight: 700;
    font-size: 15px;
}
.fxbox .vline {
    margin-left: 13px;
}

/* grid */
.sheet {
    height: 792px;
    flex: none;
    display: flex;
}
.gridwrap {
    width: 1903px;
    overflow: hidden;
    background: #fff;
}
.grid {
    table-layout: fixed;
    width: 1941px;
    border-collapse: separate;
    border-spacing: 0;
    font-family: Lato, "Open Sans", sans-serif;
    font-size: 15.5px;
    color: #111;
}
.c-row { width: 37px; }
.c-a { width: 178px; }
.c-b { width: 179px; }
.c-c { width: 116px; }
.c-d { width: 114px; }
.c-e { width: 244px; }
.c-t { width: 11px; }
.c-u { width: 118px; }
.grid th {
    background: #f0f0f0;
    color: #5c5c5c;
    font-weight: 400;
    text-align: center;
    padding: 0;
    overflow: hidden;
    border-bottom: 1px solid #dedede;
}
.grid td {
    padding: 0;
    text-align: center;
    line-height: 21px;
    border-right: 1px solid #e6e6e6;
    border-bottom: 1px solid #e6e6e6;
    overflow: hidden;
    white-space: nowrap;
}
.grid tr {
    height: 23px;
}
.grid .r-cols {
    height: 26px;
}
.r-cols th {
    border-right: 1px solid #dcdcdc;
    border-bottom: none;
}
.r-cols th.t {
    overflow: visible;
    font-size: 14px;
}
.corner i {
    width: 0;
    height: 0;
    margin: 9px 0 0 10px;
    border-left: 7px solid transparent;
    border-bottom: 7px solid #6a6a6a;
}
.grid .r2 {
    height: 21px;
}
.grid .r3 {
    height: 94px;
}
.grid .r4 {
    height: 21px;
}
.r3 th {
    border-bottom: 2px solid #c8c8c8;
}
.grid .t {
    border-left: 3px solid #bfbfbf;
}
.grid .gold {
    background: #ffe699;
    border-right: none;
    border-bottom: none;
}
.grid .steel {
    background: #5b9bd5;
    border-right: none;
    border-bottom: none;
    text-align: right;
    padding-right: 103px;
    color: #000;
}
.grid .cream, .grid .sky {
    line-height: 23px;
    border-top: 1px solid #000;
    border-right: 1px solid #000;
    border-bottom: 2px solid #c8c8c8;
}
.grid .cream {
    background: #fff2cc;
}
.grid .sky {
    background: #deeaf6;
}
.grid .num {
    text-align: right;
    padding-right: 14px;
}
.vscroll {
    width: 16px;
    position: relative;
    background: #f2f2f2;
}
.vscroll i {
    position: absolute;
}
.dash {
    top: 32px;
    left: 5px;
    width: 7px;
    height: 1px;
    background: #9a9a9a;
}
.arrow {
    left: 5px;
    width: 0;
    height: 0;
    border-left: 3.5px solid transparent;
    border-right: 3.5px solid transparent;
}
.arrow.up {
    top: 43px;
    border-bottom: 5px solid #808080;
}
.arrow.down {
    bottom: 10px;
    border-top: 5px solid #707070;
}
.thumb {
    top: 58px;
    left: 5px;
    width: 8px;
    height: 48px;
    border-radius: 4px;
    background: #b4b4b4;
}

/* sheet tabs */
.sheetbar {
    height: 25px;
    flex: none;
    display: flex;
    align-items: flex-start;
    background: #e1e4ec;
    border-bottom: 1px solid #ccd0d8;
}
.nav {
    width: 102px;
    height: 24px;
    padding-left: 14px;
    display: flex;
    align-items: center;
    gap: 11px;
}
.sheet-tab {
    width: 56px;
    height: 23px;
    background: #fff;
    border-radius: 0 0 5px 5px;
    display: flex;
    align-items: center;
    justify-content: center;
    color: #0f7b5a;
    font-weight: 700;
    font-size: 12.5px;
}
.add {
    margin: 5px 0 0 5px;
}
.hscroll {
    margin-left: auto;
    margin-right: 18px;
    width: 953px;
    height: 24px;
    display: flex;
    align-items: center;
}
.bar {
    width: 2px;
    height: 8px;
    background: #9c9c9c;
    flex: none;
}
.tri {
    width: 0;
    height: 0;
    border-top: 3.5px solid transparent;
    border-bottom: 3.5px solid transparent;
    flex: none;
}
.tri.left {
    margin-left: 13px;
    border-right: 5px solid #777;
}
.tri.right {
    margin-right: 13px;
    border-left: 5px solid #777;
}
.track {
    flex: 1;
    padding-left: 134px;
}
.hthumb {
    width: 53px;
    height: 8px;
    border-radius: 4px;
    background: #b4b4b4;
}

/* status bar */
.statusbar {
    height: 23px;
    flex: none;
    display: flex;
    align-items: center;
    background: #e1e4ec;
}
.st-a {
    margin-left: 13px;
}
.st-b {
    margin-left: 19px;
}
.st-right {
    margin-left: auto;
    height: 100%;
    display: flex;
    align-items: center;
}
.eye {
    margin-left: 13px;
}
.cross {
    margin-left: 17px;
    display: flex;
    align-items: center;
    gap: 8px;
}
.st-right .vline {
    height: 16px;
    margin-left: 14px;
}
.st-right .after-cross {
    margin-left: 16px;
}
.view {
    width: 24px;
    height: 100%;
    margin-left: 8px;
    display: flex;
    align-items: center;
    justify-content: center;
}
.view.active {
    background: #cfd2d8;
    border-radius: 3px;
}
.zoom {
    margin-left: 7px;
    display: flex;
    align-items: center;
    gap: 11px;
    font-size: 13px;
    color: #333;
}
.minus {
    width: 14px;
    height: 2px;
    margin-left: 17px;
    background: #777;
}
.slider {
    width: 106px;
    height: 3px;
    margin-left: 13px;
    background: #b4b4b4;
    position: relative;
    border-radius: 2px;
}
.fill {
    width: 54px;
    height: 3px;
    background: #1f5fc8;
}
.knob {
    position: absolute;
    left: 49px;
    top: -4px;
    width: 11px;
    height: 11px;
    border-radius: 50%;
    border: 3px solid #fff;
    background: #888;
}
.plus {
    margin-left: 13px;
}
.full {
    margin-left: 17px;
    margin-right: 15px;
}
```
